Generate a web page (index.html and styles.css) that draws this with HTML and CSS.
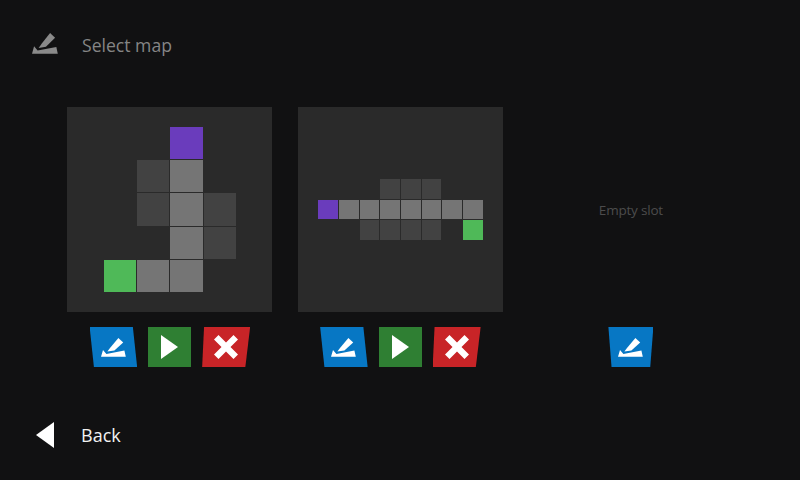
FILE: index.html
```html
<!DOCTYPE html>
<html lang="en">
<head>
<meta charset="utf-8">
<title>Select map</title>
<link rel="stylesheet" href="styles.css">
</head>
<body>
<svg class="defs" width="0" height="0" aria-hidden="true">
  <symbol id="edit" viewBox="0 0 25 19" preserveAspectRatio="none">
    <path d="M0 18.7 L2 12 L5.4 15.9 L23.4 12.6 L24.8 18.7 Z"/>
    <path d="M6.4 13.6 L9.4 9.6 L17.4 0 L22.2 4.4 L13.4 12.4 Z"/>
  </symbol>
</svg>
<div class="page">
  <header class="header">
    <svg class="header-icon"><use href="#edit"/></svg>
    <h1 class="title">Select map</h1>
  </header>
  <main class="slots">
    <section class="slot">
      <div class="card">
        <div class="grid grid-a">
          <i></i><i></i><i class="start"></i><i></i>
          <i></i><i class="wall"></i><i class="path"></i><i></i>
          <i></i><i class="wall"></i><i class="path"></i><i class="wall"></i>
          <i></i><i></i><i class="path"></i><i class="wall"></i>
          <i class="end"></i><i class="path"></i><i class="path"></i><i></i>
        </div>
      </div>
      <div class="actions">
        <button class="btn edit"><svg class="edit-icon"><use href="#edit"/></svg></button>
        <button class="btn play"><svg class="play-icon" viewBox="0 0 17 24"><path d="M0 0 L17 12 L0 24 Z"/></svg></button>
        <button class="btn del"><svg class="del-icon" viewBox="0 0 24 24"><path d="M4.5 0 L12 7.5 L19.5 0 L24 4.5 L16.5 12 L24 19.5 L19.5 24 L12 16.5 L4.5 24 L0 19.5 L7.5 12 L0 4.5 Z"/></svg></button>
      </div>
    </section>
    <section class="slot">
      <div class="card">
        <div class="grid grid-b">
          <i></i><i></i><i></i><i class="wall"></i><i class="wall"></i><i class="wall"></i><i></i><i></i>
          <i class="start"></i><i class="path"></i><i class="path"></i><i class="path"></i><i class="path"></i><i class="path"></i><i class="path"></i><i class="path"></i>
          <i></i><i></i><i class="wall"></i><i class="wall"></i><i class="wall"></i><i class="wall"></i><i></i><i class="end"></i>
        </div>
      </div>
      <div class="actions">
        <button class="btn edit"><svg class="edit-icon"><use href="#edit"/></svg></button>
        <button class="btn play"><svg class="play-icon" viewBox="0 0 17 24"><path d="M0 0 L17 12 L0 24 Z"/></svg></button>
        <button class="btn del"><svg class="del-icon" viewBox="0 0 24 24"><path d="M4.5 0 L12 7.5 L19.5 0 L24 4.5 L16.5 12 L24 19.5 L19.5 24 L12 16.5 L4.5 24 L0 19.5 L7.5 12 L0 4.5 Z"/></svg></button>
      </div>
    </section>
    <section class="slot">
      <div class="card empty"><span class="empty-label">Empty slot</span></div>
      <div class="actions">
        <button class="btn edit solo"><svg class="edit-icon"><use href="#edit"/></svg></button>
      </div>
    </section>
  </main>
  <footer class="footer">
    <svg class="back-icon" viewBox="0 0 18 26"><path d="M18 0 L18 26 L0 13 Z"/></svg>
    <span class="back-label">Back</span>
  </footer>
</div>
</body>
</html>
```
FILE: styles.css
```css
* { box-sizing: border-box; }
html, body { margin: 0; padding: 0; }
body { background: #111112; font-family: "Open Sans", sans-serif; overflow: hidden; }
.defs { position: absolute; }
.page { width: 800px; height: 480px; display: flex; flex-direction: column; }
.header { height: 107px; padding: 33px 0 0 32px; display: flex; align-items: flex-start; gap: 24px; }
.header-icon { width: 26px; height: 21px; fill: #8a8a8a; }
.title { margin: 0; font-size: 17.6px; line-height: 24px; font-weight: 400; color: #858585; }
.slots { display: flex; padding-left: 67.4px; gap: 25.5px; }
.slot { width: 205px; display: flex; flex-direction: column; align-items: center; gap: 15px; }
.card { width: 205px; height: 205px; background: #2a2a2a; display: flex; align-items: center; justify-content: center; }
.card.empty { background: none; }
.empty-label { font-size: 13.5px; color: #4c4c4c; letter-spacing: -0.2px; }
.grid { display: grid; }
.grid-a { grid-template-columns: repeat(4, 32.3px); grid-auto-rows: 32.3px; gap: 1px; }
.grid-b { grid-template-columns: repeat(8, 19.7px); grid-auto-rows: 19.7px; gap: 1px; }
.path { background: #757575; }
.wall { background: #424242; }
.start { background: #6a3cbc; }
.end { background: #4fb958; }
.actions { display: flex; gap: 11px; height: 40px; }
.btn { border: 0; padding: 0; height: 40px; display: flex; align-items: center; justify-content: center; }
.edit { width: 47.5px; background: #0777c4; clip-path: polygon(0 0, 91% 0, 100% 100%, 9% 100%); }
.edit.solo { width: 45px; clip-path: polygon(0 0, 100% 0, 93% 100%, 7% 100%); }
.play { width: 43px; background: #2f7f33; }
.del { width: 48px; background: #c82427; clip-path: polygon(4% 0, 100% 0, 90% 100%, 0 100%); }
.edit-icon { width: 25px; height: 19px; fill: #fff; }
.play-icon { width: 17px; height: 24px; fill: #fff; }
.del-icon { width: 24px; height: 24px; fill: #fff; }
.footer { margin-top: 55px; padding-left: 36px; display: flex; align-items: center; gap: 27px; }
.back-icon { width: 18px; height: 26px; fill: #fff; }
.back-label { font-size: 18px; color: #f2f2f2; }
```
